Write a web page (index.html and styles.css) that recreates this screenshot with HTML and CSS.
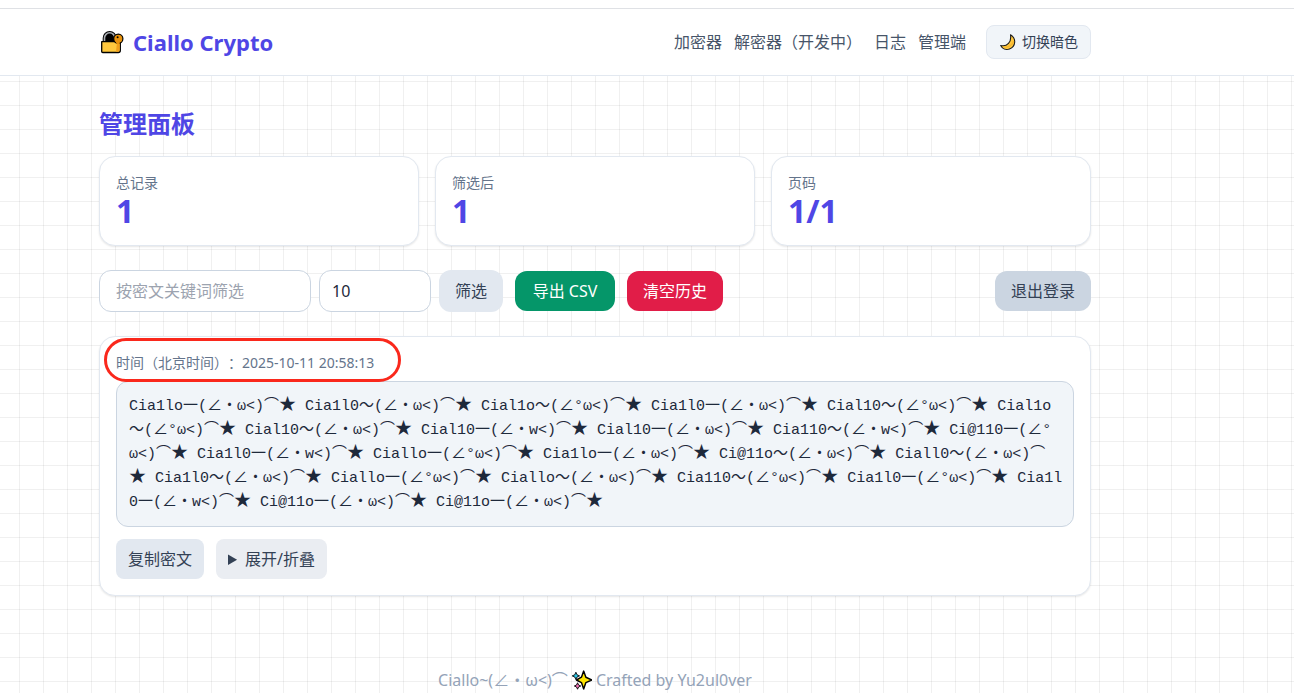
FILE: index.html
```html
<!DOCTYPE html>
<html lang="zh-CN">
<head>
    <meta charset="UTF-8">
    <meta name="viewport" content="width=device-width, initial-scale=1.0">
    <title>Ciallo Crypto</title>
    <link rel="stylesheet" href="styles.css">
</head>
<body>
    <header class="header">
        <div class="container header-inner">
            <a class="logo" href="#">
                <svg class="logo-icon" viewBox="0 0 24 24" aria-hidden="true">
                    <path d="M4.500 12V8a5.200 5.200 0 0 1 10.400 0v4z" fill="#000" stroke="#000" stroke-width="3.600"/>
                    <path d="M4.500 12V8a5.200 5.200 0 0 1 10.400 0v4" fill="#000" stroke="#a9adb2" stroke-width="1.600"/>
                    <path d="M1.700 11.700h18.600v8.800a2 2 0 0 1-2 2H2.700a1 1 0 0 1-1-1z" fill="#ffc83d" stroke="#000" stroke-width="1.300" stroke-linejoin="round"/>
                    <path d="M17 12.300h2.700v7.700a2 2 0 0 1-2 1.800H16z" fill="#f0a01c"/>
                    <circle cx="18.300" cy="8.700" r="4.600" fill="#e8920c" stroke="#000" stroke-width="1.200"/>
                    <path d="M15.500 11.500h4.200v2.500h-3z" fill="#e8920c"/>
                    <circle cx="17.600" cy="7.200" r="1" fill="#000"/>
                </svg>
                <span>Ciallo Crypto</span>
            </a>
            <div class="header-right">
                <nav class="nav">
                    <a href="#">加密器</a>
                    <a href="#">解密器（开发中）</a>
                    <a href="#">日志</a>
                    <a href="#">管理端</a>
                </nav>
                <button class="theme-toggle" type="button">
                    <svg class="moon" viewBox="0 0 16 16" aria-hidden="true">
                        <path d="M10.500 0.700c6 3.500 5.500 12-1 14.200-3.500 1.200-7.200 0-8.800-3.400 6.500 1.500 11-3.500 9.800-10.800z" fill="#ffc83d" stroke="#1b1b1b" stroke-width="1.100" stroke-linejoin="round"/>
                        <path d="M4 13c4 1 8.500-1.500 9.700-6" fill="none" stroke="#f7b52c" stroke-width="1.200"/>
                    </svg>
                    切换暗色
                </button>
            </div>
        </div>
    </header>

    <div class="page">
        <main class="container main">
            <h1>管理面板</h1>

            <section class="stats">
                <div class="card">
                    <div class="stat-label">总记录</div>
                    <div class="stat-value">1</div>
                </div>
                <div class="card">
                    <div class="stat-label">筛选后</div>
                    <div class="stat-value">1</div>
                </div>
                <div class="card">
                    <div class="stat-label">页码</div>
                    <div class="stat-value">1/1</div>
                </div>
            </section>

            <div class="toolbar">
                <form class="filter">
                    <input class="keyword" type="text" placeholder="按密文关键词筛选" aria-label="按密文关键词筛选">
                    <input class="page-size" type="number" value="10" aria-label="页码">
                    <button class="btn btn-filter" type="button">筛选</button>
                </form>
                <button class="btn btn-export" type="button">导出 CSV</button>
                <button class="btn btn-clear" type="button">清空历史</button>
                <button class="btn btn-logout" type="button">退出登录</button>
            </div>

            <article class="card record">
                <div class="record-time">时间（北京时间）：2025-10-11 20:58:13</div>
                <div class="highlight"></div>
                <pre class="cipher">Cia1lo一(∠・ω&lt;)⌒<span>★</span> Cia1l0～(∠・ω&lt;)⌒<span>★</span> Cial1o～(∠°ω&lt;)⌒<span>★</span> Cia1l0一(∠・ω&lt;)⌒<span>★</span> Cial10～(∠°ω&lt;)⌒<span>★</span> Cial1o
～(∠°ω&lt;)⌒<span>★</span> Cial10～(∠・ω&lt;)⌒<span>★</span> Cial10一(∠・w&lt;)⌒<span>★</span> Cial10一(∠・ω&lt;)⌒<span>★</span> Cia110～(∠・w&lt;)⌒<span>★</span> Ci@110一(∠°
ω&lt;)⌒<span>★</span> Cia1l0一(∠・w&lt;)⌒<span>★</span> Ciallo一(∠°ω&lt;)⌒<span>★</span> Cia1lo一(∠・ω&lt;)⌒<span>★</span> Ci@11o～(∠・ω&lt;)⌒<span>★</span> Ciall0～(∠・ω&lt;)⌒
<span>★</span> Cia1l0～(∠・ω&lt;)⌒<span>★</span> Ciallo一(∠°ω&lt;)⌒<span>★</span> Ciallo～(∠・ω&lt;)⌒<span>★</span> Cia110～(∠°ω&lt;)⌒<span>★</span> Cia1l0一(∠°ω&lt;)⌒<span>★</span> Cia1l
0一(∠・w&lt;)⌒<span>★</span> Ci@11o一(∠・ω&lt;)⌒<span>★</span> Ci@11o一(∠・ω&lt;)⌒<span>★</span></pre>
                <div class="record-actions">
                    <button class="btn-copy" type="button">复制密文</button>
                    <details>
                        <summary>展开/折叠</summary>
                    </details>
                </div>
            </article>
        </main>

        <footer class="footer">
            <span>Ciallo~(∠・ω&lt;)⌒</span>
            <svg class="sparkles" viewBox="0 0 18 18" aria-hidden="true">
                <path d="M10.500 1l2 5.500L18 9l-5.500 2.300-2 5.700-2-5.700L4 9l4.500-2.500z" fill="#ffe500" stroke="#000" stroke-width="1.300" stroke-linejoin="round"/>
                <path d="M3.500 2l1 2.300 2.300 1-2.300 1-1 2.300-1-2.300-2.300-1 2.300-1z" fill="#29c5e6" stroke="#000" stroke-width=".8"/>
                <path d="M5 11.500l.9 2 2 .9-2 .9-.9 2-.9-2-2-.9 2-.9z" fill="#f472b6" stroke="#000" stroke-width=".8"/>
            </svg>
            <span>Crafted by Yu2ul0ver</span>
        </footer>
    </div>
</body>
</html>
```
FILE: styles.css
```css
* {
    box-sizing: border-box;
}
body {
    margin: 0;
    padding-top: 8px;
    font-family: "Noto Sans", "Noto Sans CJK SC", sans-serif;
    font-size: 16px;
    line-height: 24px;
    text-spacing-trim: space-all;
    color: #1e293b;
    background-color: #fff;
    background-image:
        linear-gradient(to right, rgba(0, 0, 0, 0.06) 1px, transparent 1px),
        linear-gradient(to bottom, rgba(0, 0, 0, 0.06) 1px, transparent 1px);
    background-size: 24px 24px;
    background-position: -5px 9px;
}
a {
    color: inherit;
    text-decoration: none;
}
button,
input {
    font: inherit;
    color: inherit;
}
button {
    border: none;
    cursor: pointer;
}
.container {
    max-width: 1024px;
    padding: 0 16px;
    margin: 0 auto;
}
.header,
.page {
    padding-right: 104px;
}
.header {
    background-color: #fff;
    border-top: 1px solid #dfe1e5;
    border-bottom: 1px solid #e2e8f0;
    box-shadow: 0 -8px 0 #fff;
}
.header-inner {
    display: flex;
    align-items: center;
    justify-content: space-between;
    padding-top: 16px;
    padding-bottom: 16px;
}
.logo {
    display: flex;
    align-items: center;
    gap: 8px;
    font-size: 22px;
    font-weight: bold;
    color: #4f46e5;
}
.logo-icon {
    width: 26px;
    height: 24px;
}
.header-right {
    display: flex;
    align-items: center;
    gap: 20px;
}
.nav {
    display: flex;
    gap: 12px;
    color: #475569;
}
.theme-toggle {
    display: flex;
    align-items: center;
    gap: 5px;
    height: 34px;
    padding: 0 12px;
    font-size: 14px;
    color: #334155;
    background-color: #f1f5f9;
    border: 1px solid #e2e8f0;
    border-radius: 8px;
}
.moon {
    width: 18px;
    height: 16px;
}
.main {
    padding-top: 32px;
    padding-bottom: 32px;
}
h1 {
    margin: 0 0 16px;
    font-size: 24px;
    line-height: 32px;
    color: #4f46e5;
}
.card {
    padding: 16px;
    background-color: #fff;
    border: 1px solid #e2e8f0;
    border-radius: 16px;
    box-shadow: 0 1px 2px rgba(0, 0, 0, 0.1);
}
.stats {
    display: grid;
    grid-template-columns: repeat(3, 1fr);
    gap: 16px;
    margin-bottom: 24px;
}
.stat-label,
.record-time {
    font-size: 14px;
    line-height: 20px;
    color: #64748b;
}
.stat-value {
    font-size: 32px;
    font-weight: bold;
    line-height: 36px;
    color: #4f46e5;
}
.toolbar {
    display: flex;
    align-items: center;
    gap: 12px;
    margin-bottom: 24px;
}
.filter {
    display: flex;
    gap: 8px;
}
.filter input {
    height: 42px;
    padding: 8px 16px;
    background-color: #fff;
    border: 1px solid #cbd5e1;
    border-radius: 12px;
}
.keyword {
    width: 212px;
}
.keyword::placeholder {
    color: #9ca3af;
}
.filter .page-size {
    width: 112px;
    padding: 8px 12px;
}
.btn {
    padding: 8px 16px;
    border-radius: 12px;
}
.btn-filter {
    color: #334155;
    background-color: #e2e8f0;
}
.btn-export {
    min-width: 100px;
    color: #fff;
    background-color: #059669;
}
.btn-clear {
    color: #fff;
    background-color: #e11d48;
}
.btn-logout {
    margin-left: auto;
    color: #334155;
    background-color: #cbd5e1;
}
.record {
    position: relative;
}
.highlight {
    position: absolute;
    top: 1px;
    left: 4px;
    width: 297px;
    height: 44px;
    border: 3px solid #fa281c;
    border-radius: 22px;
    pointer-events: none;
}
.cipher {
    margin: 8px 0 12px;
    padding: 13px 12px 11px;
    overflow: hidden;
    font-family: "Liberation Mono", "Noto Sans CJK SC", monospace;
    font-size: 15px;
    line-height: 24px;
    background-color: #f1f5f9;
    border: 1px solid #cbd5e1;
    border-radius: 12px;
}
/* stars are drawn a little larger than the text */
.cipher span {
    font-size: 17px;
    line-height: 1;
}
.record-actions {
    display: flex;
    gap: 12px;
    color: #334155;
}
.btn-copy,
summary {
    padding: 8px 12px;
    border-radius: 8px;
    cursor: pointer;
}
.btn-copy {
    background-color: #e2e8f0;
}
summary {
    background-color: #eaedf2;
}
.footer {
    display: flex;
    align-items: center;
    justify-content: center;
    gap: 4px;
    margin-top: 40px;
    color: #94a3b8;
}
.sparkles {
    width: 20px;
    height: 20px;
}
```
